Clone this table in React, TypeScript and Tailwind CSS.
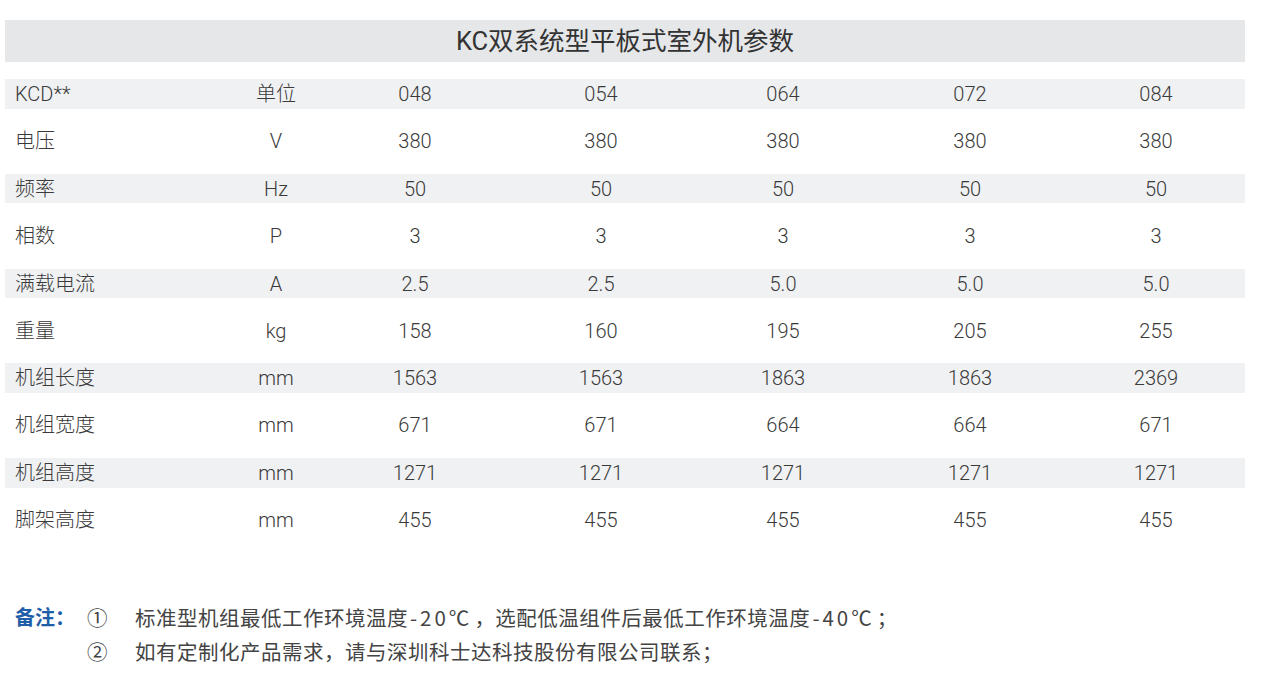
import React from 'react';

const rows: [string, string, string[]][] = [
  ['KCD**', '单位', ['048', '054', '064', '072', '084']],
  ['电压', 'V', ['380', '380', '380', '380', '380']],
  ['频率', 'Hz', ['50', '50', '50', '50', '50']],
  ['相数', 'P', ['3', '3', '3', '3', '3']],
  ['满载电流', 'A', ['2.5', '2.5', '5.0', '5.0', '5.0']],
  ['重量', 'kg', ['158', '160', '195', '205', '255']],
  ['机组长度', 'mm', ['1563', '1563', '1863', '1863', '2369']],
  ['机组宽度', 'mm', ['671', '671', '664', '664', '671']],
  ['机组高度', 'mm', ['1271', '1271', '1271', '1271', '1271']],
  ['脚架高度', 'mm', ['455', '455', '455', '455', '455']],
];

const font = { fontFamily: 'Roboto, "Noto Sans CJK SC", sans-serif' };

export default function App() {
  return (
    <div className="w-[1276px] h-[673px] bg-white text-[#3a3a3a] pt-5 overflow-hidden" style={font}>
      <div className="mx-[5px] w-[1240px] h-[42px] bg-[#e6e7e9] flex items-center justify-center text-[25.5px] text-[#333]">
        KC双系统型平板式室外机参数
      </div>

      <div className="mt-[17px] ml-[5px] w-[1240px] font-light text-[20px]">
        {rows.map(([label, unit, vals], i) => (
          <div
            key={label}
            className={
              'grid grid-cols-[226px_90px_188px_184px_180px_194px_178px] items-center ' +
              (i % 2 === 0 ? 'h-[29.5px] bg-[#f0f1f3]' : 'h-[65.25px]')
            }
          >
            <div className="pl-[10px]">{label}</div>
            <div className="text-center">{unit}</div>
            {vals.map((v, j) => (
              <div key={j} className="text-center">
                {v}
              </div>
            ))}
          </div>
        ))}
      </div>

      <div
        className="mt-[47px] ml-[15px] text-[20.5px] text-[#444] leading-[34px] tracking-[0.5px]"
        style={{ fontFamily: '"Noto Sans CJK SC", sans-serif' }}
      >
        <div className="flex">
          <span className="w-[72px] text-[20px] tracking-normal font-bold text-[#1f5ea8]">备注：</span>
          <span className="w-[48px]">①</span>
          <span>
            标准型机组最低工作环境温度<span className="tracking-[3px] px-[2px]">-20℃</span>，选配低温组件后最低工作环境温度
            <span className="tracking-[3px] px-[2px]">-40℃</span>；
          </span>
        </div>
        <div className="flex">
          <span className="w-[72px]"></span>
          <span className="w-[48px]">②</span>
          <span>如有定制化产品需求，请与深圳科士达科技股份有限公司联系；</span>
        </div>
      </div>
    </div>
  );
}
